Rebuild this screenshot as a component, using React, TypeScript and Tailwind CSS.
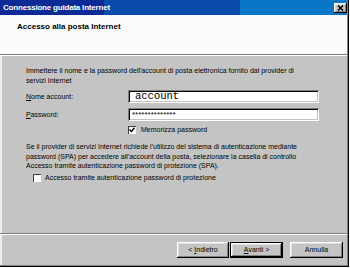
import React from "react";

const raised =
  "shadow-[inset_-1px_-1px_#000,inset_1px_1px_#fff,inset_-2px_-2px_#808080,inset_2px_2px_#dfdfdf]";
const sunken =
  "shadow-[inset_1px_1px_#808080,inset_-1px_-1px_#fff,inset_2px_2px_#000,inset_-2px_-2px_#c4c4c4]";

function CheckBox({ checked }: { checked?: boolean }) {
  return (
    <div className="w-[8px] h-[8px] bg-white shadow-[inset_1px_1px_#404040] flex items-center justify-center shrink-0">
      {checked && (
        <svg width="6" height="6" viewBox="0 0 6 6">
          <path d="M0.5 2.5 L2.3 4.5 L5.5 0.8" stroke="#000" strokeWidth="1.4" fill="none" />
        </svg>
      )}
    </div>
  );
}

export default function App() {
  return (
    <div className="w-[350px] h-[268px] bg-white font-['Liberation_Sans',Arial,sans-serif] text-black">
      <div className="w-[349px] h-[267px] flex flex-col border-r border-b border-black">
        <div className="flex-1 flex flex-col border-r border-b border-[#808080]">
          {/* Title bar */}
          <div className="h-[15px] shrink-0 flex items-center justify-between pl-[3px] bg-[linear-gradient(to_right,#0a2a96_0px,#0a2a96_104px,#0b4bab_104px,#0b4bab_240px,#0a76c6_240px)]">
            <span className="text-white font-bold text-[8px] leading-[15px] tracking-[-0.2px]">
              Connessione guidata Internet
            </span>
            <div className={`w-[13px] h-[10px] mt-[1px] bg-[#c4c4c4] ${raised} flex items-center justify-center`}>
              <svg width="7" height="6" viewBox="0 0 7 6">
                <path d="M1 0.5 L6 5.5 M6 0.5 L1 5.5" stroke="#000" strokeWidth="1.5" />
              </svg>
            </div>
          </div>
          {/* Header */}
          <div className="h-[39px] shrink-0 bg-[#fcfcfc] pl-[17px] pt-[7px]">
            <div className="font-bold text-[8px] leading-[10px]">Accesso alla posta Internet</div>
          </div>
          <div className="h-px bg-[#808080] shrink-0" />
          <div className="h-px bg-white shrink-0" />
          {/* Body */}
          <div className="flex-1 bg-[#c4c4c4] border-l-2 border-[#eeeeee] pl-[24px] pt-[10px] text-[7px] leading-[10px]">
            <div>
              Immettere il nome e la password dell'account di posta elettronica fornito dal provider di
              <br />
              servizi Internet
            </div>
            <div className="mt-[4px] flex items-center h-[13px]">
              <div className="w-[102px]">
                <span className="underline">N</span>ome account:
              </div>
              <div className={`w-[191px] h-[13px] bg-white ${sunken} pl-[7px] flex items-center font-['Liberation_Mono',monospace] text-[10.5px] leading-[13px]`}>
                account
              </div>
            </div>
            <div className="mt-[5px] flex items-center h-[13px]">
              <div className="w-[102px]">
                <span className="underline">P</span>assword:
              </div>
              <div className={`w-[191px] h-[13px] bg-white ${sunken} pl-[4px] flex items-center text-[8px] leading-[13px]`}>
                **************
              </div>
            </div>
            <div className="mt-[4px] ml-[102px] flex items-center gap-[5px] h-[9px]">
              <CheckBox checked />
              <span>Memorizza password</span>
            </div>
            <div className="mt-[8px] leading-[9.5px]">
              Se il provider di servizi Internet richiede l'utilizzo del sistema di autenticazione mediante
              <br />
              password (SPA) per accedere all'account della posta, selezionare la casella di controllo
              <br />
              Accesso tramite autenticazione password di protezione (SPA).
            </div>
            <div className="mt-[3px] ml-[7px] flex items-center gap-[4px] h-[9px]">
              <CheckBox />
              <span>Accesso tramite autenticazione password di protezione</span>
            </div>
          </div>
          <div className="h-px bg-[#808080] shrink-0" />
          <div className="h-px bg-white shrink-0" />
          {/* Footer */}
          <div className="h-[30px] shrink-0 bg-[#c4c4c4] border-l-2 border-[#eeeeee] flex items-start pt-[7px] pl-[175px] text-[7px]">
            <div className={`w-[52px] h-[16px] bg-[#c4c4c4] ${raised} flex items-center justify-center`}>
              &lt; <span className="underline ml-[2px]">I</span>ndietro
            </div>
            <div className="w-[53px] h-[16px] ml-[1px] border border-black">
              <div className={`w-full h-full bg-[#c4c4c4] ${raised} flex items-center justify-center`}>
                <span className="underline">A</span>vanti &gt;
              </div>
            </div>
            <div className={`w-[53px] h-[16px] ml-[7px] bg-[#c4c4c4] ${raised} flex items-center justify-center`}>
              Annulla
            </div>
          </div>
        </div>
      </div>
    </div>
  );
}
